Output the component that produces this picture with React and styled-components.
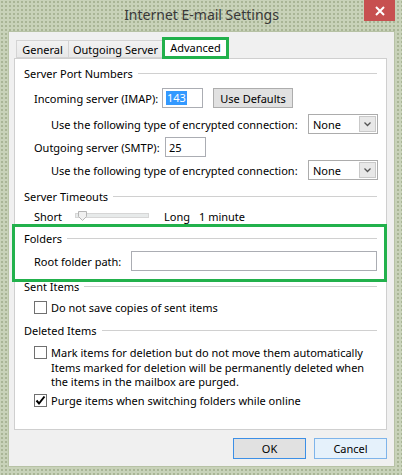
import React from "react";
import styled, { createGlobalStyle } from "styled-components";

const GlobalStyle = createGlobalStyle`
  html, body {
    margin: 0;
    padding: 0;
  }
  body {
    width: 402px;
    height: 475px;
    overflow: hidden;
    font-family: "Noto Sans", "Open Sans", sans-serif;
    font-size: 11px;
    color: #000;
  }
`;

const Frame = styled.div`
  width: 402px;
  height: 475px;
  box-sizing: border-box;
  display: flex;
  flex-direction: column;
  padding: 0 7px 8px 8px;
  background-color: #c8d2b9;
  background-image: radial-gradient(circle, #a9b596 0.8px, transparent 1.1px);
  background-size: 4px 4px;
`;

const TitleBar = styled.div`
  height: 31px;
  display: grid;
  grid-template-columns: 31px 1fr 31px;
  align-items: start;
`;

const Title = styled.div`
  grid-column: 2;
  text-align: center;
  font-size: 14px;
  line-height: 30px;
  color: #383838;
`;

const CloseButton = styled.div`
  grid-column: 3;
  height: 21px;
  background: #c75050;
  display: flex;
  align-items: center;
  justify-content: center;
`;

const Client = styled.div`
  flex: 1;
  display: flex;
  flex-direction: column;
  box-sizing: border-box;
  background: #f0f0f0;
  border: 1px solid #b7c2a5;
  padding: 6px 7px 0 5px;
`;

const TabStrip = styled.div`
  height: 20px;
  display: flex;
  align-items: flex-end;
  padding-left: 2px;
  position: relative;
  z-index: 1;
`;

const Tab = styled.div`
  box-sizing: border-box;
  width: ${(p) => p.$w}px;
  height: ${(p) => (p.$active ? 21 : 18)}px;
  margin-bottom: ${(p) => (p.$active ? -1 : 0)}px;
  margin-left: ${(p) => (p.$first ? 0 : -1)}px;
  border: 1px solid #d4d4d4;
  border-bottom: ${(p) => (p.$active ? "none" : "1px solid #d4d4d4")};
  background: ${(p) => (p.$active ? "#fff" : "linear-gradient(#f2f2f2, #e8e8e8)")};
  display: flex;
  align-items: center;
  justify-content: center;
  padding-bottom: ${(p) => (p.$active ? 3 : 0)}px;
  position: relative;
  white-space: nowrap;

  ${(p) =>
    p.$marked &&
    `
    &::after {
      content: "";
      position: absolute;
      top: -2px;
      left: -1px;
      right: -1px;
      bottom: 0;
      border: 3px solid #22b14c;
    }
  `}
`;

const Panel = styled.div`
  height: 372px;
  box-sizing: border-box;
  background: #fff;
  border: 1px solid #cfcfcf;
  padding: 0 9px 0 9px;
  display: flex;
  flex-direction: column;
`;

const GroupHeader = styled.div`
  height: 16px;
  margin-top: ${(p) => p.$mt}px;
  display: flex;
  align-items: center;
  gap: 5px;
  white-space: nowrap;

  &::after {
    content: "";
    flex: 1;
    height: 1px;
    background: #d0d0d0;
  }
`;

const Group = styled.div`
  display: flex;
  flex-direction: column;
  position: relative;

  ${(p) =>
    p.$marked &&
    `
    &::after {
      content: "";
      position: absolute;
      top: 0;
      left: -12px;
      right: -10px;
      bottom: -11px;
      border: 3px solid #22b14c;
      pointer-events: none;
    }
  `}
`;

const Row = styled.div`
  height: ${(p) => p.$h || 20}px;
  margin-top: ${(p) => p.$mt}px;
  padding-left: ${(p) => p.$indent}px;
  display: flex;
  align-items: center;
  white-space: nowrap;
`;

const Label = styled.span`
  width: ${(p) => (p.$w ? `${p.$w}px` : "auto")};
  flex-shrink: 0;
  margin-right: ${(p) => p.$mr || 0}px;
`;

const TextBox = styled.div`
  box-sizing: border-box;
  width: ${(p) => (p.$w ? `${p.$w}px` : "auto")};
  flex: ${(p) => (p.$w ? "none" : 1)};
  height: ${(p) => p.$h || 20}px;
  border: 1px solid #abadb3;
  background: #fff;
  display: flex;
  align-items: center;
  padding-left: 3px;
`;

const Selected = styled.span`
  background: #3399ff;
  color: #fff;
  line-height: 14px;
  padding: 0 1px;
`;

const PushButton = styled.div`
  box-sizing: border-box;
  width: ${(p) => p.$w}px;
  height: ${(p) => p.$h || 21}px;
  margin-left: ${(p) => p.$ml || 0}px;
  border: 1px solid ${(p) => (p.$default ? "#3c8fe6" : p.$hover ? "#7eb4ea" : "#adadad")};
  background: ${(p) => (p.$hover ? "#e5f1fb" : "#e1e1e1")};
  display: flex;
  align-items: center;
  justify-content: center;
`;

const Select = styled.div`
  box-sizing: border-box;
  width: 70px;
  height: 20px;
  margin-left: auto;
  margin-right: -1px;
  border: 1px solid #acacac;
  background: #fff;
  display: flex;
  align-items: center;
  padding: 1px 1px 1px 4px;
`;

const SelectValue = styled.span`
  flex: 1;
`;

const DropArrow = styled.div`
  box-sizing: border-box;
  width: 17px;
  height: 16px;
  border: 1px solid #c9c9c9;
  background: #e8e8e8;
  display: flex;
  align-items: center;
  justify-content: center;
`;

const Box = styled.div`
  box-sizing: border-box;
  width: 13px;
  height: 13px;
  border: 1px solid #707070;
  background: #fff;
  margin-right: 4px;
  display: flex;
  align-items: center;
  justify-content: center;
`;

const Note = styled.div`
  margin-top: 1px;
  padding-left: 17px;
  margin-left: 10px;
`;

const NoteLine = styled.div`
  height: 14px;
  line-height: 14px;
  white-space: nowrap;
`;

const ButtonRow = styled.div`
  margin-top: 8px;
  display: flex;
  justify-content: flex-end;
  gap: 8px;
`;

function Check({ checked }) {
  return (
    <Box>
      {checked && (
        <svg width="11" height="11" viewBox="0 0 11 11">
          <path d="M1.5 5.5 L4 8.5 L9.5 1.5" fill="none" stroke="#000" strokeWidth="2" />
        </svg>
      )}
    </Box>
  );
}

function Dropdown({ value }) {
  return (
    <Select>
      <SelectValue>{value}</SelectValue>
      <DropArrow>
        <svg width="7" height="5" viewBox="0 0 7 5">
          <path d="M0.5 0.5 L3.5 3.5 L6.5 0.5" fill="none" stroke="#555" strokeWidth="1.3" />
        </svg>
      </DropArrow>
    </Select>
  );
}

function Slider() {
  return (
    <svg width="74" height="12" viewBox="0 0 74 12" style={{ marginLeft: 13, marginRight: 15 }}>
      <rect x="0.5" y="3.5" width="73" height="4" fill="#e7eaea" stroke="#d6d6d6" />
      <path d="M3.5 1.5 H11.5 V6.5 L7.5 10.5 L3.5 6.5 Z" fill="#f0f0f0" stroke="#b5b5b5" />
    </svg>
  );
}

export default function App() {
  return (
    <>
      <GlobalStyle />
      <Frame>
        <TitleBar>
          <Title>Internet E-mail Settings</Title>
          <CloseButton>
            <svg width="10" height="10" viewBox="0 0 10 10">
              <path d="M1 1 L9 9 M9 1 L1 9" stroke="#fff" strokeWidth="2" />
            </svg>
          </CloseButton>
        </TitleBar>
        <Client>
          <TabStrip>
            <Tab $w={53} $first>General</Tab>
            <Tab $w={95}>Outgoing Server</Tab>
            <Tab $w={67} $active $marked>Advanced</Tab>
          </TabStrip>
          <Panel>
            <GroupHeader $mt={6}>Server Port Numbers</GroupHeader>
            <Row $mt={7} $indent={10}>
              <Label $w={128}>Incoming server (IMAP):</Label>
              <TextBox $w={41}>
                <Selected>143</Selected>
              </TextBox>
              <PushButton $w={80} $h={20} $ml={10}>Use Defaults</PushButton>
            </Row>
            <Row $mt={6} $indent={27}>
              <Label>Use the following type of encrypted connection:</Label>
              <Dropdown value="None" />
            </Row>
            <Row $mt={3} $indent={10}>
              <Label $w={131}>Outgoing server (SMTP):</Label>
              <TextBox $w={41}>25</TextBox>
            </Row>
            <Row $mt={3} $indent={27}>
              <Label>Use the following type of encrypted connection:</Label>
              <Dropdown value="None" />
            </Row>

            <GroupHeader $mt={8}>Server Timeouts</GroupHeader>
            <Row $mt={4} $h={16} $indent={10}>
              <Label $w={28}>Short</Label>
              <Slider />
              <Label $w={35}>Long</Label>
              <Label>1 minute</Label>
            </Row>

            <Group $marked>
              <GroupHeader $mt={6}>Folders</GroupHeader>
              <Row $mt={5} $indent={10}>
                <Label $w={97}>Root folder path:</Label>
                <TextBox />
              </Row>
            </Group>

            <GroupHeader $mt={7}>Sent Items</GroupHeader>
            <Row $mt={5} $h={16} $indent={10}>
              <Check />
              <Label>Do not save copies of sent items</Label>
            </Row>

            <GroupHeader $mt={7}>Deleted Items</GroupHeader>
            <Row $mt={6} $h={16} $indent={10}>
              <Check />
              <Label>Mark items for deletion but do not move them automatically</Label>
            </Row>
            <Note>
              <NoteLine>Items marked for deletion will be permanently deleted when</NoteLine>
              <NoteLine>the items in the mailbox are purged.</NoteLine>
            </Note>
            <Row $mt={3} $h={16} $indent={10}>
              <Check checked />
              <Label>Purge items when switching folders while online</Label>
            </Row>
          </Panel>
          <ButtonRow>
            <PushButton $w={73} $default>OK</PushButton>
            <PushButton $w={73} $hover>Cancel</PushButton>
          </ButtonRow>
        </Client>
      </Frame>
    </>
  );
}
